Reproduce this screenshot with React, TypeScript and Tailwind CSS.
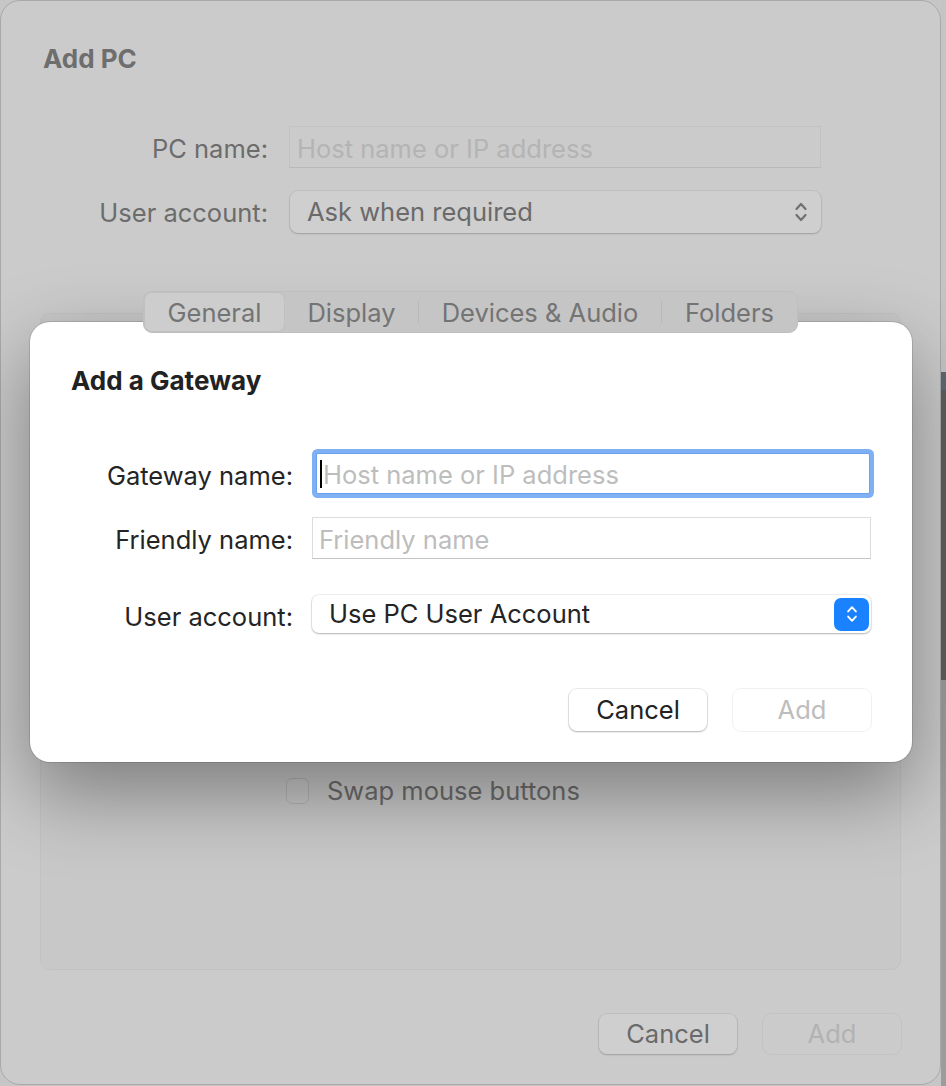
import React from "react";

const font = { fontFamily: "Inter, 'Noto Sans', sans-serif" };

function Chevrons({ className }: { className?: string }) {
  return (
    <svg viewBox="0 0 14 24" className={className} fill="none" stroke="currentColor" strokeWidth="2.2" strokeLinecap="round" strokeLinejoin="round">
      <path d="M2.5 9 L7 4 L11.5 9" />
      <path d="M2.5 15 L7 20 L11.5 15" />
    </svg>
  );
}

function BackWindow() {
  return (
    <div className="w-[941px] h-[1085px] rounded-[20px] bg-[#cbcbcb] border border-[#a9a9a9] flex flex-col pt-[43px] text-[25.5px] text-[#6c6c6c]">
      <h1 className="pl-[42px] font-bold text-[26px] leading-[30px] text-[#6e6e6e]">Add PC</h1>

      <div className="mt-[52px] flex items-center">
        <div className="w-[267px] text-right leading-[30px] pt-[4px]">PC name:</div>
        <div className="ml-[21px] w-[532px] h-[42px] bg-[#cbcbcb] border border-[#c2c2c2] border-b-[#b8b8b8] flex items-center px-[7px] pt-[4px] text-[#b4b4b4]">
          Host name or IP address
        </div>
      </div>

      <div className="mt-[23px] flex items-center">
        <div className="w-[267px] text-right leading-[30px] pt-[2px]">User account:</div>
        <div className="ml-[22px] w-[531px] h-[42px] rounded-[8px] bg-[#cfcfcf] shadow-[0_1px_2px_rgba(0,0,0,0.18),0_0_0_1px_rgba(0,0,0,0.05)] flex items-center justify-between pl-[17px] pr-[13px] text-[#6a6a6a]">
          <span>Ask when required</span>
          <Chevrons className="w-[14px] h-[24px] text-[#707070]" />
        </div>
      </div>

      <div className="mt-[58px] flex flex-col items-center">
        <div className="relative z-10 -mb-[20px] flex h-[42px] w-[655px] rounded-[9px] bg-[#c5c5c5] border border-[#bfbfbf] text-[#747474]">
          <div className="w-[141px] rounded-[8px] bg-[#cdcdcd] border border-[#c0c0c0] flex items-center justify-center pt-[2px]">General</div>
          <div className="w-[133px] flex items-center justify-center pt-[2px]">Display</div>
          <div className="w-px my-[9px] bg-[#b8b8b8]" />
          <div className="flex-1 flex items-center justify-center pt-[2px]">Devices &amp; Audio</div>
          <div className="w-px my-[9px] bg-[#b8b8b8]" />
          <div className="w-[135px] flex items-center justify-center pt-[2px]">Folders</div>
        </div>
        <div className="w-[861px] h-[657px] rounded-[10px] bg-[#c8c8c8] border border-[#c2c2c2] pt-[458px] pl-[245px]">
          <div className="flex items-center gap-[18px]">
            <div className="w-[23px] h-[26px] rounded-[6px] border border-[#b5b5b5] bg-[#c9c9c9]" />
            <span className="text-[#6c6c6c]">Swap mouse buttons</span>
          </div>
        </div>
      </div>

      <div className="mt-[44px] flex justify-end gap-[26px] pr-[39px]">
        <div className="w-[138px] h-[40px] rounded-[8px] bg-[#cfcfcf] shadow-[0_1px_2px_rgba(0,0,0,0.18),0_0_0_1px_rgba(0,0,0,0.05)] flex items-center justify-center text-[#6a6a6a]">
          Cancel
        </div>
        <div className="w-[138px] h-[40px] rounded-[8px] bg-[#cbcbcb] shadow-[0_0_0_1px_rgba(0,0,0,0.04)] flex items-center justify-center text-[#b2b2b2]">
          Add
        </div>
      </div>
    </div>
  );
}

function GatewaySheet() {
  return (
    <div className="absolute left-[30px] top-[322px] w-[882px] h-[440px] rounded-[20px] bg-white shadow-[0_0_0_1px_rgba(0,0,0,0.12),0_30px_80px_rgba(0,0,0,0.38)] flex flex-col pt-[44px] text-[25.5px] text-[#242424]">
      <h2 className="pl-[41px] font-bold text-[26px] leading-[30px] text-[#222]">Add a Gateway</h2>

      <div className="mt-[57px] flex items-center">
        <div className="w-[263px] text-right leading-[30px] pt-[4px]">Gateway name:</div>
        <div className="ml-[23px] w-[554px] h-[41px] rounded-[2px] border border-[#6aa0ee] shadow-[0_0_0_4px_#80b0f4] bg-white flex items-center pl-[3px] pt-[3px] text-[#bdbdbd]">
          <div className="w-[2px] h-[28px] bg-black mr-[1px] -mt-[3px]" />
          <span>Host name or IP address</span>
        </div>
      </div>

      <div className="mt-[23px] flex items-center">
        <div className="w-[263px] text-right leading-[30px] pt-[3px]">Friendly name:</div>
        <div className="ml-[19px] w-[559px] h-[42px] border border-[#dcdcdc] border-b-[#c4c4c4] bg-white flex items-center pl-[6px] pt-[4px] text-[#bdbdbd]">
          Friendly name
        </div>
      </div>

      <div className="mt-[36px] flex items-center">
        <div className="w-[263px] text-right leading-[30px] pt-[6px]">User account:</div>
        <div className="ml-[19px] w-[559px] h-[38px] rounded-[7px] bg-white shadow-[0_1px_2px_rgba(0,0,0,0.25),0_0_0_1px_rgba(0,0,0,0.06)] flex items-center justify-between pl-[17px] pr-[2px]">
          <span>Use PC User Account</span>
          <div className="w-[35px] h-[33px] rounded-[7px] bg-[#1a82ff] flex items-center justify-center">
            <Chevrons className="w-[12px] h-[22px] text-white" />
          </div>
        </div>
      </div>

      <div className="mt-[56px] flex justify-end gap-[26px] pr-[41px]">
        <div className="w-[138px] h-[42px] rounded-[8px] bg-white shadow-[0_1px_2px_rgba(0,0,0,0.25),0_0_0_1px_rgba(0,0,0,0.07)] flex items-center justify-center text-[#222]">
          Cancel
        </div>
        <div className="w-[138px] h-[42px] rounded-[8px] bg-white shadow-[0_0_0_1px_rgba(0,0,0,0.06)] flex items-center justify-center text-[#bdbdbd]">
          Add
        </div>
      </div>
    </div>
  );
}

export default function App() {
  return (
    <div className="relative w-[946px] h-[1086px] overflow-hidden bg-[#c6c6c6] flex" style={font}>
      <BackWindow />
      <div className="flex-1 flex flex-col">
        <div className="h-[372px] bg-[#c4c4c4]" />
        <div className="h-[18px] bg-[#5f6872]" />
        <div className="h-[290px] bg-[#5e5e5e]" />
        <div className="flex-1 bg-[#9c9c9c]" />
      </div>
      <GatewaySheet />
    </div>
  );
}
